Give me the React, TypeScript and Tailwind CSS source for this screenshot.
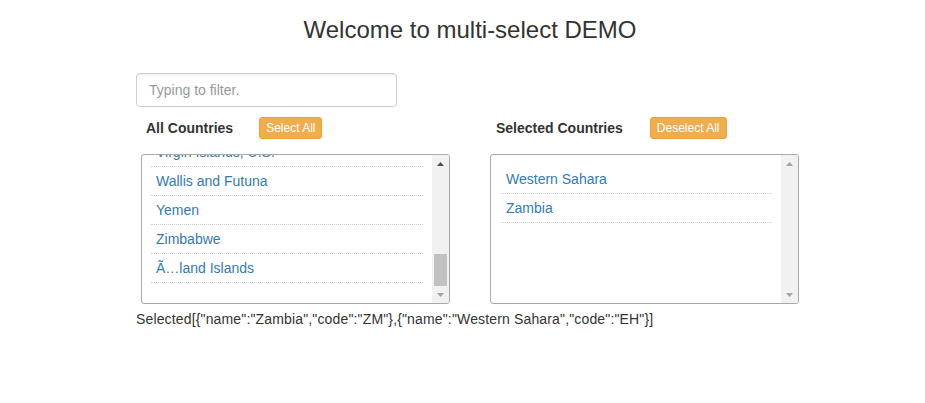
import React from "react";

function Arrow({ up, color }: { up: boolean; color: string }) {
  return (
    <svg width="7" height="4" viewBox="0 0 7 4">
      {up ? (
        <polygon points="0,4 7,4 3.5,0" fill={color} />
      ) : (
        <polygon points="0,0 7,0 3.5,4" fill={color} />
      )}
    </svg>
  );
}

function ScrollBar({ thumb, upColor, downColor }: { thumb: boolean; upColor: string; downColor: string }) {
  return (
    <div className="w-[17px] bg-[#f1f1f1] flex flex-col shrink-0">
      <div className="h-[17px] flex items-center justify-center">
        <Arrow up color={upColor} />
      </div>
      <div className="flex-1 flex flex-col justify-end">
        {thumb && <div className="h-[32px] mx-[2px] bg-[#c1c1c1]" />}
      </div>
      <div className="h-[17px] flex items-center justify-center">
        <Arrow up={false} color={downColor} />
      </div>
    </div>
  );
}

function Row({ name }: { name: string }) {
  return (
    <li className="px-[5px] py-[4px] leading-[20px] text-[14px] text-[#337ab7] border-b border-dotted border-[#cccccc]">
      {name}
    </li>
  );
}

export default function App() {
  const left = ["Virgin Islands, U.S.", "Wallis and Futuna", "Yemen", "Zimbabwe", "Ã…land Islands"];
  const right = ["Western Sahara", "Zambia"];
  return (
    <div
      className="w-[925px] h-[403px] bg-white text-[#333333] text-[14px]"
      style={{ fontFamily: '"Liberation Sans", Arial, sans-serif' }}
    >
      <div className="pl-[15px] pt-[17px]">
        <h3 className="text-center text-[24px] leading-[26px] font-normal">Welcome to multi-select DEMO</h3>
      </div>
      <div className="ml-[136px] mt-[30px]">
        <input
          className="block w-[261px] h-[34px] px-[12px] py-[6px] border border-[#cccccc] rounded-[4px] text-[14px] placeholder:text-[#999999] outline-none shadow-[inset_0_1px_1px_rgba(0,0,0,0.075)]"
          placeholder="Typing to filter."
        />
        <div className="flex mt-[10px]">
          <div className="w-[350px] shrink-0">
            <div className="flex items-center h-[22px] pl-[10px] gap-[26px]">
              <span className="font-bold">All Countries</span>
              <button className="h-[22px] px-[6px] text-[12px] leading-[18px] text-white bg-[#f0ad4e] border border-[#eea236] rounded-[3px]">
                Select All
              </button>
            </div>
            <div className="ml-[5px] mt-[15px] w-[309px] h-[150px] border border-[#a9a9a9] rounded-[3px] flex overflow-hidden">
              <div className="flex-1 flex flex-col justify-end overflow-hidden">
                <ul className="pl-[9px] pr-[9px] pt-[10px] pb-[20px]">
                  {left.map((n) => (
                    <Row key={n} name={n} />
                  ))}
                </ul>
              </div>
              <ScrollBar thumb upColor="#505050" downColor="#a3a3a3" />
            </div>
          </div>
          <div>
            <div className="flex items-center h-[22px] pl-[10px] gap-[27px]">
              <span className="font-bold">Selected Countries</span>
              <button className="h-[22px] px-[6px] text-[12px] leading-[18px] text-white bg-[#f0ad4e] border border-[#eea236] rounded-[3px]">
                Deselect All
              </button>
            </div>
            <div className="ml-[4px] mt-[15px] w-[309px] h-[150px] border border-[#a9a9a9] rounded-[3px] flex overflow-hidden">
              <div className="flex-1 overflow-hidden">
                <ul className="pl-[10px] pr-[9px] pt-[10px] pb-[20px]">
                  {right.map((n) => (
                    <Row key={n} name={n} />
                  ))}
                </ul>
              </div>
              <ScrollBar thumb={false} upColor="#a3a3a3" downColor="#a3a3a3" />
            </div>
          </div>
        </div>
        <div className="mt-[5px] leading-[20px] tracking-[0.15px]">
          Selected[{'{"name":"Zambia","code":"ZM"},{"name":"Western Sahara","code":"EH"}'}]
        </div>
      </div>
    </div>
  );
}
